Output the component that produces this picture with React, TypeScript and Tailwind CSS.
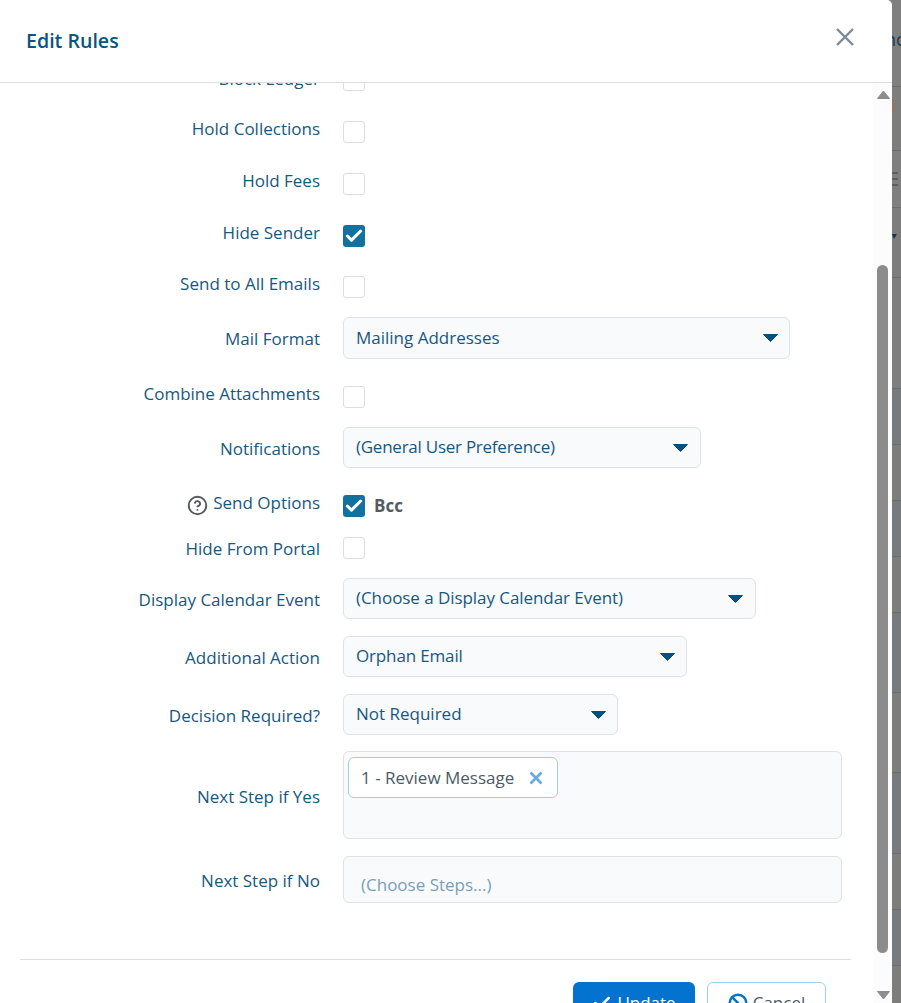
import type { ReactNode } from "react";
import { Check, CircleHelp, Ban } from "lucide-react";

const stripRows = [
  { h: 87, bg: "bg-[#7f7f7f]", body: "nc" },
  { h: 64, bg: "bg-[#7d7d7c]", body: "tag" },
  { h: 57, bg: "bg-[#7f7f7f]", body: "menu" },
  { h: 70, bg: "bg-[#7d7d7d]", body: "caret" },
  { h: 111, bg: "bg-[#7e7e7e]", body: "" },
  { h: 56, bg: "bg-[#777b7e]", body: "" },
  { h: 56, bg: "bg-[#7d7d7c]", body: "" },
  { h: 56, bg: "bg-[#777b7e]", body: "" },
  { h: 56, bg: "bg-[#7d7d7c]", body: "" },
  { h: 80, bg: "bg-[#777b7e]", body: "" },
  { h: 80, bg: "bg-[#7d7d7c]", body: "" },
  { h: 81, bg: "bg-[#777b7e]", body: "" },
  { h: 56, bg: "bg-[#7d7d7c]", body: "" },
  { h: 56, bg: "bg-[#777b7e]", body: "" },
  { h: 38, bg: "bg-[#7d7d7c]", body: "" },
];

function BackdropStrip() {
  return (
    <div className="w-[9px] h-[1003px] overflow-hidden flex flex-col">
      {stripRows.map((r, i) => (
        <div
          key={i}
          className={`${r.bg} shrink-0 border-b border-[#6b6e70] overflow-hidden flex items-center`}
          style={{ height: r.h }}
        >
          {r.body === "nc" && (
            <span className="ml-[-7px] mt-[-9px] text-[18px] leading-none text-[#0f3c57] whitespace-nowrap">nc</span>
          )}
          {r.body === "tag" && <div className="w-[2px] h-[13px] bg-[#8f7660] mt-[-26px]" />}
          {r.body === "menu" && (
            <div className="flex flex-col gap-[4px] mt-[-1px]">
              <div className="w-[6px] h-[2px] bg-[#5c5e60]" />
              <div className="w-[6px] h-[2px] bg-[#5c5e60]" />
              <div className="w-[6px] h-[2px] bg-[#5c5e60]" />
            </div>
          )}
          {r.body === "caret" && (
            <svg width="6" height="6" viewBox="0 0 6 6" className="mt-[-12px]">
              <path d="M0 0h5L2 5z" fill="#16364a" />
            </svg>
          )}
        </div>
      ))}
    </div>
  );
}

function Caret() {
  return (
    <svg width="15" height="8" viewBox="0 0 15 8" className="shrink-0">
      <path d="M0.5 0.5h14L7.5 7.5z" fill="#04507f" stroke="#04507f" strokeLinejoin="round" />
    </svg>
  );
}

function Checkbox({ checked }: { checked?: boolean }) {
  if (checked) {
    return (
      <div className="w-[22px] h-[22px] rounded-[3px] bg-[#12719f] flex items-center justify-center shrink-0">
        <Check size={20} strokeWidth={3.6} className="text-white" />
      </div>
    );
  }
  return <div className="w-[22px] h-[22px] rounded-[3px] border border-[#dcdfe2] bg-white shrink-0" />;
}

function Select({ value, className, textClass = "" }: { value: string; className: string; textClass?: string }) {
  return (
    <div
      className={`${className} rounded-[6px] border border-[#dfe2e6] bg-[#f8fafc] pl-[12px] flex items-center justify-between text-[#17587f]`}
    >
      <span className={`mt-[-1px] ${textClass}`}>{value}</span>
      <Caret />
    </div>
  );
}

interface RowProps {
  label: ReactNode;
  className: string;
  labelClass?: string;
  children: ReactNode;
}

function Row({ label, className, labelClass = "mt-[2px]", children }: RowProps) {
  return (
    <div className={`flex items-center ${className}`}>
      <div className={`w-[320px] shrink-0 text-right text-[#17587f] whitespace-nowrap flex justify-end items-center ${labelClass}`}>
        {label}
      </div>
      <div className="ml-[23px] flex items-center">{children}</div>
    </div>
  );
}

function CheckRow({ label, checked, className, labelClass = "mt-[-6px]" }: { label: string; checked?: boolean; className: string; labelClass?: string }) {
  return (
    <Row label={label} className={className} labelClass={labelClass}>
      <Checkbox checked={checked} />
    </Row>
  );
}

export default function App() {
  return (
    <div className="w-[901px] h-[1003px] overflow-hidden flex font-['Open_Sans',sans-serif] text-[17px] leading-[24px] bg-[#7f7f7f]">
      <div className="w-[892px] h-[1003px] bg-white rounded-tr-[5px] flex flex-col overflow-hidden shrink-0">
        <header className="h-[83px] shrink-0 border-b border-[#dedede] flex items-center justify-between pl-[26px] pr-[38px]">
          <h1 className="text-[19.6px] font-semibold leading-[28px] text-[#0a5580]">Edit Rules</h1>
          <svg width="18" height="18" viewBox="0 0 18 18" className="mt-[-8px]">
            <path d="M1 1l16 16M17 1L1 17" stroke="#7a8b96" strokeWidth="2.4" fill="none" />
          </svg>
        </header>

        <div className="flex flex-1 min-h-0">
          <div className="w-[873px] shrink-0 overflow-hidden">
            <div className="mt-[-14px]">
              <CheckRow label="Block Ledger" className="h-[22px]" labelClass="mt-[-2px]" />
              <CheckRow label="Hold Collections" className="h-[22px] mt-[30px]" />
              <CheckRow label="Hold Fees" className="h-[22px] mt-[30px]" />
              <CheckRow label="Hide Sender" checked className="h-[22px] mt-[30px]" />
              <CheckRow label="Send to All Emails" className="h-[22px] mt-[29px]" />
              <Row label="Mail Format" className="mt-[19px]">
                <Select value="Mailing Addresses" className="w-[447px] h-[42px] pr-[11px]" />
              </Row>
              <CheckRow label="Combine Attachments" className="h-[22px] mt-[27px]" />
              <Row label="Notifications" className="mt-[19px]">
                <Select value="(General User Preference)" className="w-[358px] h-[41px] pr-[12px]" textClass="tracking-[-0.25px]" />
              </Row>
              <Row
                className="h-[22px] mt-[27px]"
                labelClass="mt-[-6px]"
                label={
                  <>
                    <CircleHelp size={21} strokeWidth={2.2} className="text-[#555b60] mr-[5px] mt-[4px]" />
                    Send Options
                  </>
                }
              >
                <Checkbox checked />
                <span className="ml-[9px] font-bold text-[#555b60]">Bcc</span>
              </Row>
              <CheckRow label="Hide From Portal" className="h-[22px] mt-[20px]" labelClass="mt-[1px]" />
              <Row label="Display Calendar Event" className="mt-[19px]">
                <Select value="(Choose a Display Calendar Event)" className="w-[413px] h-[41px] pr-[12px]" textClass="tracking-[-0.06px]" />
              </Row>
              <Row label="Additional Action" className="mt-[17px]">
                <Select value="Orphan Email" className="w-[344px] h-[41px] pr-[11px]" textClass="tracking-[-0.15px]" />
              </Row>
              <Row label="Decision Required?" className="mt-[17px]">
                <Select value="Not Required" className="w-[275px] h-[41px] pr-[11px]" />
              </Row>
              <Row label="Next Step if Yes" className="mt-[16px]" labelClass="mt-[4px]">
                <div className="w-[499px] h-[88px] rounded-[6px] border border-[#dfe2e6] bg-[#f8fafc] pl-[4px] pt-[5px]">
                  <div className="w-[210px] h-[41px] rounded-[6px] border border-[#9ccfea] bg-white pl-[12px] pr-[14px] flex items-center justify-between text-[#4b5a66]">
                    <span>1 - Review Message</span>
                    <svg width="14" height="14" viewBox="0 0 14 14">
                      <path d="M1.5 1.5l11 11M12.5 1.5l-11 11" stroke="#6aa9e0" strokeWidth="2.8" fill="none" />
                    </svg>
                  </div>
                </div>
              </Row>
              <Row label="Next Step if No" className="mt-[17px]">
                <div className="w-[499px] h-[47px] rounded-[6px] border border-[#dfe2e6] bg-[#f8fafc] pl-[17px] pt-[16px] text-[#7a9fb8]">
                  (Choose Steps...)
                </div>
              </Row>
              <div className="mt-[56px] ml-[20px] w-[831px] h-px bg-[#dedede]" />
              <div className="mt-[22px] ml-[573px] flex gap-[12px]">
                <button className="w-[122px] h-[42px] rounded-[6px] bg-[#0473cf] text-white flex items-center justify-center gap-[5px]">
                  <Check size={20} strokeWidth={3} />
                  Update
                </button>
                <button className="w-[119px] h-[42px] rounded-[6px] border border-[#9ccfea] bg-white text-[#4b5a66] flex items-center justify-center gap-[5px]">
                  <Ban size={20} strokeWidth={3} className="text-[#0473cf]" />
                  Cancel
                </button>
              </div>
            </div>
          </div>

          <div className="w-[19px] shrink-0 bg-[#fcfcfc] flex flex-col items-center">
            <svg width="13" height="9" viewBox="0 0 13 9" className="mt-[7px] ml-[1px]">
              <path d="M6.5 1L12.5 8.5H0.5z" fill="#8c8c8c" stroke="#8c8c8c" strokeLinejoin="round" />
            </svg>
            <div className="w-[11px] h-[688px] mt-[166px] rounded-[6px] bg-[#8c8c8c]" />
            <svg width="13" height="9" viewBox="0 0 13 9" className="mt-[38px] ml-[1px]">
              <path d="M0.5 0.5H12.5L6.5 8z" fill="#8c8c8c" stroke="#8c8c8c" strokeLinejoin="round" />
            </svg>
          </div>
        </div>
      </div>
      <BackdropStrip />
    </div>
  );
}
